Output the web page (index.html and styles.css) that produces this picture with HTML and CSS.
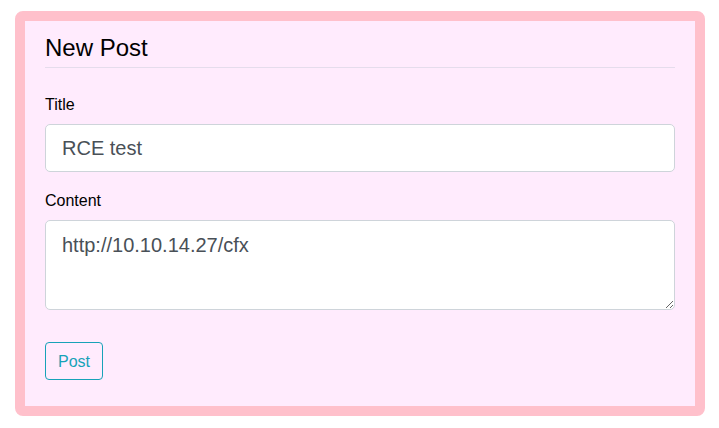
FILE: index.html
```html
<!DOCTYPE html>
<html>
<head>
<meta charset="utf-8">
<link rel="stylesheet" href="styles.css">
</head>
<body>
<div class="card">
  <h1 class="title">New Post</h1>
  <form class="form">
    <div class="group">
      <label class="label" for="t">Title</label>
      <input class="control" id="t" type="text" value="RCE test">
    </div>
    <div class="group">
      <label class="label" for="c">Content</label>
      <textarea class="control area" id="c">http://10.10.14.27/cfx</textarea>
    </div>
    <button class="btn" type="button">Post</button>
  </form>
</div>
</body>
</html>
```
FILE: styles.css
```css
* { box-sizing: border-box; }
html, body { margin: 0; padding: 0; background: #fff; }
body {
  font-family: "Liberation Sans", Arial, sans-serif;
  font-size: 16px;
  line-height: 1.5;
  color: #000;
  padding: 11px 14px 12px 15px;
}
.card {
  width: 690px;
  height: 405px;
  border: 10px solid #ffc0cb;
  border-radius: 8px;
  background: #ffebfd;
  padding: 10px 20px 20px 20px;
}
.title {
  margin: 0 0 24px 0;
  font-size: 24px;
  font-weight: 400;
  line-height: 1.2;
  padding-top: 3px;
  padding-bottom: 4px;
  border-bottom: 1px solid #e5dcec;
}
.form { margin: 0; }
.group { margin-bottom: 16px; }
.label {
  display: block;
  padding-top: 1px;
  margin-bottom: 7px;
}
.control {
  display: block;
  width: 100%;
  height: 48px;
  padding: 9px 16px 7px 16px;
  font-family: "Liberation Sans", Arial, sans-serif;
  font-size: 20px;
  line-height: 1.5;
  color: #495057;
  background: #fff;
  border: 1px solid #ced4da;
  border-radius: 5px;
  margin: 0;
}
.area {
  height: 90px;
  resize: vertical;
}
.group:last-of-type { margin-bottom: 32px; }
.btn {
  display: block;
  height: 38px;
  padding: 7px 12px 5px 12px;
  font-family: "Liberation Sans", Arial, sans-serif;
  font-size: 16px;
  line-height: 1.5;
  color: #17a2b8;
  background: transparent;
  border: 1px solid #17a2b8;
  border-radius: 4px;
}
```
